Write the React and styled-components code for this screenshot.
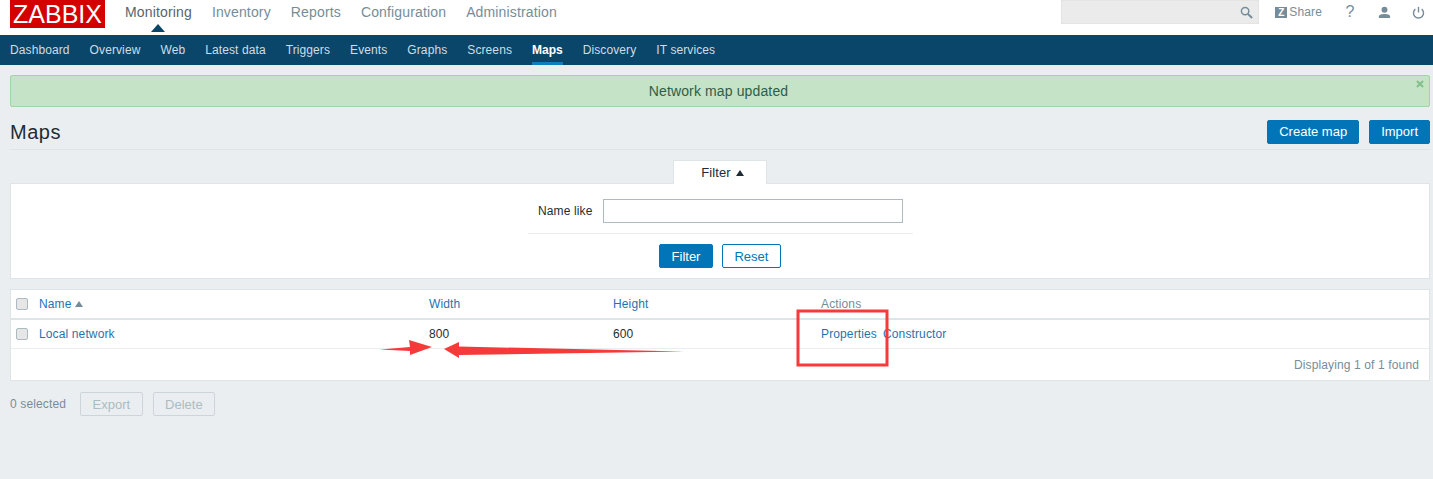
import React from 'react'
import styled, { createGlobalStyle } from 'styled-components'

const GlobalStyle = createGlobalStyle`
  html, body {
    margin: 0;
    padding: 0;
    background: #ebeef0;
    font-family: "Liberation Sans", Arial, sans-serif;
    font-size: 12px;
    letter-spacing: 0.13px;
    color: #1f2c33;
  }
`

const Page = styled.div`
  position: relative;
  width: 1433px;
  height: 479px;
  overflow: hidden;
`

const TopBar = styled.header`
  height: 35px;
  background: #fff;
  display: flex;
  align-items: flex-start;
  padding: 0 8px 0 10px;
  box-sizing: border-box;
`

const Logo = styled.div`
  width: 95px;
  height: 28px;
  background: #d40000;
  color: #fff;
  font-size: 25px;
  line-height: 29px;
  text-align: center;
  letter-spacing: 0;
`

const MainNav = styled.nav`
  display: flex;
  gap: 20px;
  margin-left: 20px;
  height: 24px;
  align-items: center;
`

const MainItem = styled.a`
  position: relative;
  font-size: 14px;
  letter-spacing: 0.15px;
  color: ${p => (p.$active ? '#59646b' : '#768d99')};
  &::after {
    content: '';
    display: ${p => (p.$active ? 'block' : 'none')};
    position: absolute;
    left: 50%;
    margin-left: -7px;
    top: 20px;
    border-left: 7px solid transparent;
    border-right: 7px solid transparent;
    border-bottom: 8px solid #0a466a;
  }
`

const Tools = styled.div`
  margin-left: auto;
  display: flex;
  align-items: center;
  height: 24px;
`

const SearchBox = styled.div`
  width: 198px;
  height: 24px;
  box-sizing: border-box;
  background: #ebebeb;
  border: 1px solid #e4e4e4;
  display: flex;
  align-items: center;
  justify-content: flex-end;
  padding-right: 5px;
  margin-right: 16px;
`

const ShareLink = styled.a`
  display: flex;
  align-items: center;
  gap: 2px;
  color: #768d99;
  margin-right: 1px;
`

const ZBadge = styled.span`
  width: 12px;
  height: 11px;
  background: #768d99;
  color: #fff;
  font-size: 10px;
  font-weight: bold;
  line-height: 11px;
  text-align: center;
  letter-spacing: 0;
`

const ToolIcon = styled.span`
  width: 14px;
  margin-left: 20px;
  display: flex;
  justify-content: center;
  color: #768d99;
  font-size: 16px;
`

const SubNav = styled.nav`
  height: 30px;
  background: #0a466a;
  display: flex;
  gap: 20px;
  padding-left: 10px;
`

const SubItem = styled.a`
  height: 30px;
  box-sizing: border-box;
  line-height: 30px;
  color: ${p => (p.$active ? '#fff' : '#cfdde6')};
  font-weight: ${p => (p.$active ? 'bold' : 'normal')};
  letter-spacing: ${p => (p.$active ? '0' : '0.1px')};
  border-bottom: ${p => (p.$active ? '3px solid #0f7cc0' : 'none')};
`

const Content = styled.main`
  padding: 10px 3px 0 10px;
`

const Message = styled.div`
  position: relative;
  height: 32px;
  box-sizing: border-box;
  background: #c5e3c7;
  border: 1px solid #a3d4a6;
  border-radius: 2px;
  padding-right: 3px;
  text-align: center;
  font-size: 14px;
  line-height: 30px;
  color: #2f5e46;
`

const Close = styled.span`
  position: absolute;
  right: 5px;
  top: 4px;
  display: flex;
`

const TitleRow = styled.div`
  height: 43px;
  border-bottom: 1px solid #dfe4e7;
  display: flex;
  align-items: center;
  justify-content: space-between;
  padding-top: 7px;
  box-sizing: border-box;
`

const Title = styled.h1`
  margin: 0;
  padding-top: 1px;
  font-size: 20px;
  font-weight: normal;
  letter-spacing: 0.5px;
  color: #1f2c33;
`

const ButtonRow = styled.div`
  display: flex;
  gap: 10px;
`

const Button = styled.button`
  height: 24px;
  box-sizing: border-box;
  padding: 0 ${p => p.$pad || 11}px;
  font: inherit;
  font-size: 13px;
  border-radius: 2px;
  background: ${p => (p.$outline ? '#fff' : '#0275b8')};
  color: ${p => (p.$outline ? '#0275b8' : '#fff')};
  border: 1px solid #0275b8;
`

const GhostButton = styled.button`
  height: 24px;
  box-sizing: border-box;
  padding: 0 11.5px;
  font: inherit;
  font-size: 13px;
  border-radius: 2px;
  background: transparent;
  color: #acbbc2;
  border: 1px solid #ccd5d9;
`

const TabRow = styled.div`
  display: flex;
  justify-content: center;
  margin-top: 10px;
  margin-bottom: -1px;
  position: relative;
`

const FilterTab = styled.div`
  width: 94px;
  height: 24px;
  box-sizing: border-box;
  background: #fff;
  border: 1px solid #dfe4e7;
  border-bottom: none;
  padding-left: 5px;
  display: flex;
  align-items: center;
  justify-content: center;
  gap: 5px;
  font-size: 13px;
  color: #1f2c33;
`

const FilterArrow = styled.span`
  border-left: 4.5px solid transparent;
  border-right: 4.5px solid transparent;
  border-bottom: 6px solid #1f2c33;
`

const FilterBox = styled.section`
  height: 96px;
  box-sizing: border-box;
  background: #fff;
  border: 1px solid #dfe4e7;
  display: flex;
  flex-direction: column;
  align-items: center;
  padding-top: 15px;
`

const FilterFields = styled.div`
  width: 385px;
  height: 35px;
  border-bottom: 1px solid #ebeef0;
  display: flex;
  justify-content: flex-end;
  gap: 10px;
  padding-right: 10px;
  box-sizing: border-box;
`

const FieldLabel = styled.label`
  line-height: 24px;
  color: #1f2c33;
`

const TextInput = styled.div`
  width: 300px;
  height: 24px;
  box-sizing: border-box;
  background: #fff;
  border: 1px solid #acbbc2;
`

const FilterActions = styled.div`
  display: flex;
  gap: 9px;
  margin-top: 10px;
`

const TableCard = styled.section`
  margin-top: 10px;
  height: 92px;
  box-sizing: border-box;
  background: #fff;
  border: 1px solid #dfe4e7;
`

const Row = styled.div`
  display: grid;
  grid-template-columns: 28px 390px 184px 208px 1fr;
  height: ${p => (p.$head ? 30 : 29)}px;
  box-sizing: border-box;
  align-items: center;
  border-bottom: ${p => (p.$head ? '2px solid #dfe4e7' : '1px solid #ebeef0')};
`

const CheckCell = styled.span`
  padding-left: 5px;
  display: flex;
`

const Check = styled.span`
  width: 12px;
  height: 12px;
  box-sizing: border-box;
  background: #e6e6e6;
  border: 1px solid #acbbc2;
  border-radius: 2px;
`

const CellLink = styled.a`
  color: #1f73b3;
  display: inline-flex;
  align-items: center;
  gap: 3px;
`

const SortArrow = styled.span`
  border-left: 4px solid transparent;
  border-right: 4px solid transparent;
  border-bottom: 6px solid #768d99;
`

const HeadText = styled.span`
  color: #768d99;
`

const ActionLinks = styled.span`
  display: flex;
  gap: 6px;
`

const TableFoot = styled.div`
  height: 32px;
  line-height: 32px;
  text-align: right;
  padding-right: 10px;
  color: #768d99;
`

const BulkBar = styled.div`
  display: flex;
  align-items: center;
  gap: 10px;
  margin-top: 11px;
`

const SelectedCount = styled.span`
  color: #768d99;
  margin-right: 4px;
`

const Annotation = styled.svg`
  position: absolute;
  left: 0;
  top: 0;
  pointer-events: none;
`

const subItems = ['Dashboard', 'Overview', 'Web', 'Latest data', 'Triggers', 'Events', 'Graphs', 'Screens', 'Maps', 'Discovery', 'IT services']

const App = () => (
  <Page>
    <GlobalStyle />
    <TopBar>
      <Logo>ZABBIX</Logo>
      <MainNav>
        <MainItem $active>Monitoring</MainItem>
        <MainItem>Inventory</MainItem>
        <MainItem>Reports</MainItem>
        <MainItem>Configuration</MainItem>
        <MainItem>Administration</MainItem>
      </MainNav>
      <Tools>
        <SearchBox>
          <svg width="13" height="13" viewBox="0 0 14 14" fill="none" stroke="#768d99" strokeWidth="1.6">
            <circle cx="5.5" cy="5.5" r="4" />
            <path d="M8.5 8.5L13 13" strokeWidth="2.2" />
          </svg>
        </SearchBox>
        <ShareLink><ZBadge>Z</ZBadge>Share</ShareLink>
        <ToolIcon>?</ToolIcon>
        <ToolIcon>
          <svg width="13" height="13" viewBox="0 0 14 13" fill="#768d99">
            <circle cx="7" cy="3.5" r="3.2" />
            <path d="M1 12.5V10.5C1 8.8 4 8 7 8s6 .8 6 2.5v2z" />
          </svg>
        </ToolIcon>
        <ToolIcon>
          <svg width="13" height="13" viewBox="0 0 14 14" fill="none" stroke="#768d99" strokeWidth="1.5">
            <path d="M3.6 3.4a5.4 5.4 0 1 0 6.8 0" />
            <path d="M7 1v6" />
          </svg>
        </ToolIcon>
      </Tools>
    </TopBar>
    <SubNav>
      {subItems.map(item => (
        <SubItem key={item} $active={item === 'Maps'}>{item}</SubItem>
      ))}
    </SubNav>
    <Content>
      <Message>
        Network map updated
        <Close>
          <svg width="8" height="8" viewBox="0 0 9 9" stroke="#86c08c" strokeWidth="2.4">
            <path d="M1 1l7 7M8 1l-7 7" />
          </svg>
        </Close>
      </Message>
      <TitleRow>
        <Title>Maps</Title>
        <ButtonRow>
          <Button>Create map</Button>
          <Button>Import</Button>
        </ButtonRow>
      </TitleRow>
      <TabRow>
        <FilterTab>Filter <FilterArrow /></FilterTab>
      </TabRow>
      <FilterBox>
        <FilterFields>
          <FieldLabel>Name like</FieldLabel>
          <TextInput />
        </FilterFields>
        <FilterActions>
          <Button $pad={11.5}>Filter</Button>
          <Button $outline $pad={11.5}>Reset</Button>
        </FilterActions>
      </FilterBox>
      <TableCard>
        <Row $head>
          <CheckCell><Check /></CheckCell>
          <span><CellLink>Name <SortArrow /></CellLink></span>
          <CellLink>Width</CellLink>
          <CellLink>Height</CellLink>
          <HeadText>Actions</HeadText>
        </Row>
        <Row>
          <CheckCell><Check /></CheckCell>
          <CellLink>Local network</CellLink>
          <span>800</span>
          <span>600</span>
          <ActionLinks>
            <CellLink>Properties</CellLink>
            <CellLink>Constructor</CellLink>
          </ActionLinks>
        </Row>
        <TableFoot>Displaying 1 of 1 found</TableFoot>
      </TableCard>
      <BulkBar>
        <SelectedCount>0 selected</SelectedCount>
        <GhostButton>Export</GhostButton>
        <GhostButton>Delete</GhostButton>
      </BulkBar>
    </Content>
    <Annotation width="1433" height="479" viewBox="0 0 1433 479">
      <rect x="798" y="311" width="89" height="54" fill="none" stroke="#f53a3a" strokeWidth="3" />
      <path d="M380 349.5L410 347L409 340L432 347L410 355L410 351Z" fill="#f53a3a" />
      <path d="M444 349L459 342L459 346.5L684 351.5L459 355L459 358Z" fill="#f53a3a" />
    </Annotation>
  </Page>
)

export default App
